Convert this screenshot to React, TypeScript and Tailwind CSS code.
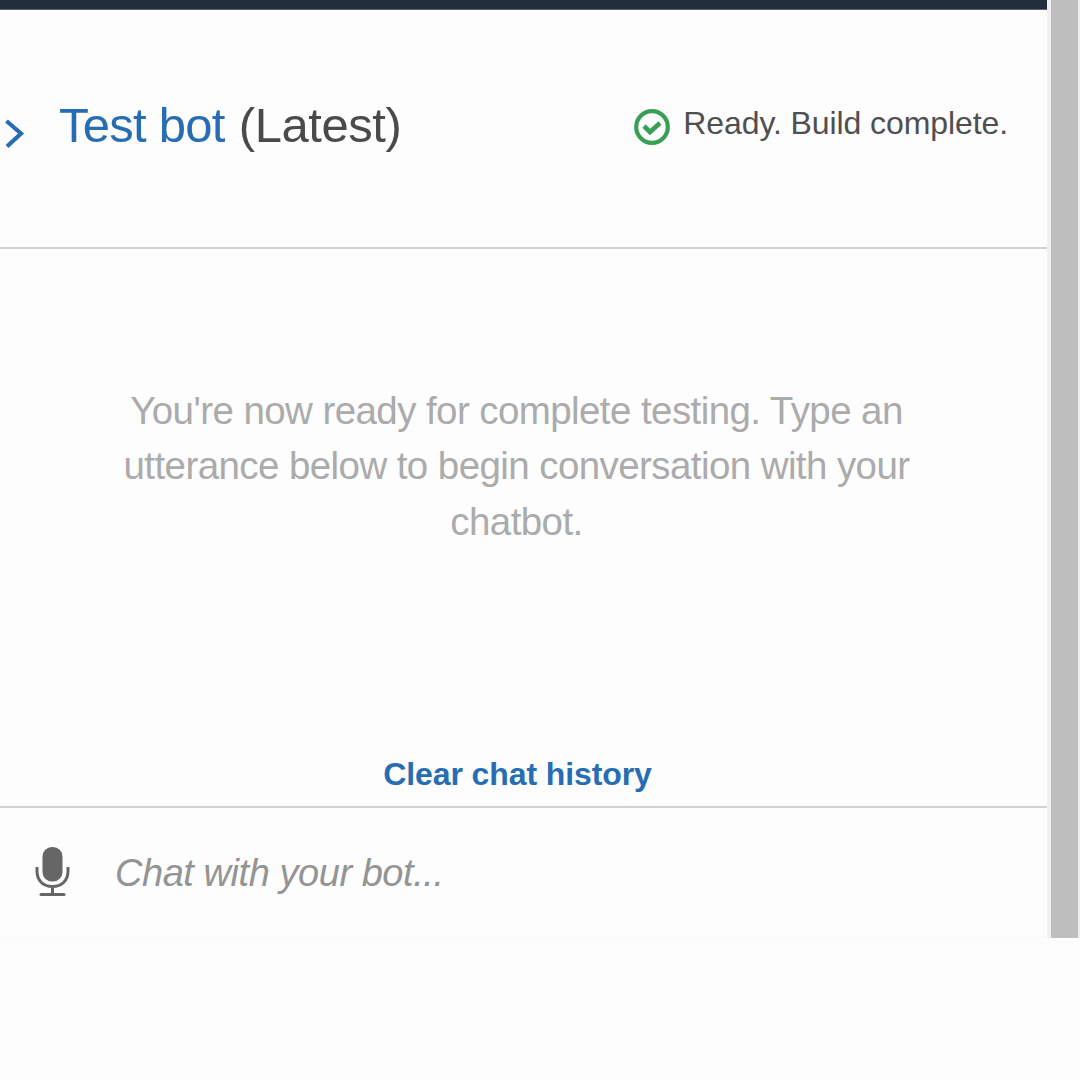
function Header() {
  return (
    <header className="flex h-[239px] items-start border-b-2 border-[#d2d2d2] pt-[86px]">
      <svg className="mt-[22px] ml-[4px] h-[32px] w-[22px] shrink-0" viewBox="0 0 22 32" fill="none">
        <path d="M2.500 3 17 15.500 3 28.500" stroke="#276db3" strokeWidth="4.200" />
      </svg>
      <h1 className="ml-[33px] text-[49px] leading-[58px] tracking-[-0.450px] whitespace-nowrap text-[#4a4a4a]">
        <span className="mr-px tracking-[-0.750px] text-[#276db3]">Test bot</span> (Latest)
      </h1>
      <div className="mr-[39px] ml-auto flex items-start">
        <svg className="mt-[12px] h-[38px] w-[38px]" viewBox="0 0 38 38" fill="none" stroke="#3a9f56">
          <circle cx="19" cy="19" r="15.800" strokeWidth="4.200" />
          <path d="M11 18 17 24 27 15" strokeWidth="4.600" />
        </svg>
        <p className="ml-[12px] text-[32px] leading-[54px] tracking-[-0.090px] whitespace-nowrap text-[#4f4f4f]">
          Ready. Build complete.
        </p>
      </div>
    </header>
  );
}

function Microphone() {
  return (
    <svg className="mt-[37px] ml-[34px] h-[54px] w-[38px] shrink-0" viewBox="0 0 38 54" fill="none" stroke="#666" strokeWidth="3">
      <rect x="8.500" y="2" width="20" height="34.500" rx="9.500" fill="#666" stroke="none" />
      <path d="M3 22v4c0 10 6.500 15.500 15.500 15.500S34 36 34 26v-4M18.500 41v8" />
      <path d="M7 49.500h23" strokeLinecap="round" />
    </svg>
  );
}

export default function App() {
  return (
    <div className="h-[1080px] w-[1080px] overflow-hidden bg-[#fdfdfd] font-['Liberation_Sans',Arial,sans-serif]">
      <div className="flex h-[938px]">
        <main className="flex w-[1047px] flex-col">
          <div className="h-[10px] shrink-0 border-b border-[#5c6067] bg-[#222e3b]" />
          <Header />
          <section className="flex h-[559px] flex-col items-center border-b-2 border-[#d2d2d2] pt-[134px]">
            <p className="mr-[14px] w-[1033px] text-center text-[38.5px] leading-[55.300px] tracking-[-0.580px] text-[#ababab]">
              You&apos;re now ready for complete testing. Type an
              <br />
              utterance below to begin conversation with your
              <br />
              chatbot.
            </p>
            <button className="mt-auto mr-[12px] mb-[12px] text-[32px] leading-[40px] font-bold tracking-[-0.100px] text-[#276db3]">
              Clear chat history
            </button>
          </section>
          <footer className="flex h-[130px] items-start border-b border-[#f8f8f8]">
            <Microphone />
            <p className="mt-[43px] ml-[43px] text-[38px] leading-[44px] tracking-[-0.450px] text-[#949494] italic">
              Chat with your bot...
            </p>
          </footer>
        </main>
        <div className="w-[33px] border-r-2 border-l-4 border-r-[#ededed] border-l-[#f1f1f1] bg-[#bebebe]" />
      </div>
    </div>
  );
}
